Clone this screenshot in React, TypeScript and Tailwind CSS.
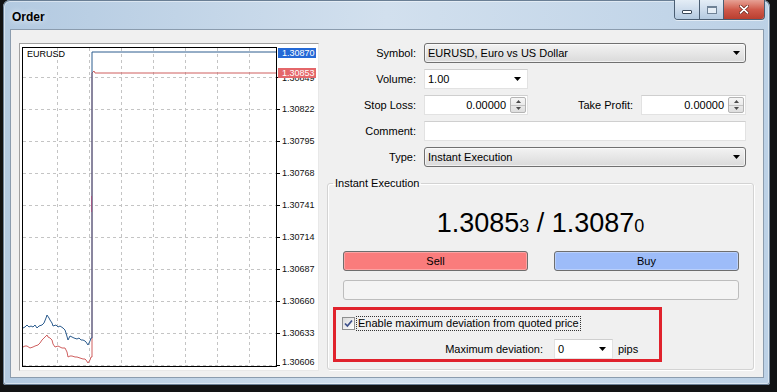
import React from "react";

const gridX = [37, 69, 101, 133, 165, 197, 229];
const gridY = [33, 65, 97, 129, 161, 193, 225, 257, 289, 321];

const axisLabels: [string, number][] = [
  ["1.30822", 65],
  ["1.30795", 97],
  ["1.30768", 129],
  ["1.30741", 161],
  ["1.30714", 193],
  ["1.30687", 225],
  ["1.30660", 257],
  ["1.30633", 289],
  ["1.30606", 318],
];

const askLine =
  "3,284 5,283 7,281 9,283 11,282 13,283 15,281 17,284 19,282 22,281 24,279 26,274 27,271 29,274 30,276 32,279 33,282 36,281 38,283 40,282 43,284 45,286 46,289 48,296 50,292 52,293 54,294 57,295 59,294 61,296 63,296 65,297 66,298 68,301 70,297 71,294 72,294 72,8 256,8";

const bidLine =
  "3,303 5,302 7,302 10,304 13,303 15,302 18,301 20,299 22,296 24,294 25,293 27,291 28,293 30,294 32,296 33,300 35,303 38,302 40,303 42,304 45,304 47,308 48,313 50,312 52,312 55,313 57,313 60,314 63,315 65,315 66,316 68,319 70,316 71,313 72,313 72,29 74,27 75,29 256,29";

function PriceChart() {
  return (
    <div className="h-[328px] w-[300px] border border-t-[#a0a0a0] border-l-[#a0a0a0] border-r-[#e8e8e8] border-b-[#e8e8e8] bg-white">
      <svg width="298" height="326" viewBox="0 0 298 326" className="block" fontFamily="'Liberation Sans', Arial, sans-serif">
        <defs>
          <clipPath id="under-bid">
            <rect x={258} y={34} width={40} height={6} />
          </clipPath>
        </defs>
        {gridX.map((x) => (
          <line key={x} x1={x + 0.5} y1={4} x2={x + 0.5} y2={322} stroke="#c4c4c4" strokeDasharray="3 3" />
        ))}
        {gridY.map((y) => (
          <line key={y} x1={3} y1={y + 0.5} x2={256} y2={y + 0.5} stroke="#c4c4c4" strokeDasharray="3 3" />
        ))}
        {gridY.map((y) => (
          <line key={"t" + y} x1={257} y1={y + 0.5} x2={260} y2={y + 0.5} stroke="#000" />
        ))}
        <polyline points={bidLine} fill="none" stroke="#cf5f5f" strokeWidth="1" />
        <polyline points={askLine} fill="none" stroke="#2c5c8e" strokeWidth="1" />
        <line x1={71.5} y1={152} x2={71.5} y2={168} stroke="#a25a86" />
        <rect x={2.5} y={3.5} width={254} height={319} fill="none" stroke="#000" />
        <text x={7} y={13} fontSize="9" fill="#000">
          EURUSD
        </text>
        {axisLabels.map(([t, y]) => (
          <text key={t} x={262} y={y + 3} fontSize="9" fill="#111">
            {t}
          </text>
        ))}
        <g clipPath="url(#under-bid)">
          <text x={262} y={37} fontSize="9" fill="#111">
            1.30849
          </text>
        </g>
        <rect x={258} y={24} width={38} height={10} fill="#e4676a" />
        <text x={262} y={32} fontSize="9" fill="#fff">
          1.30853
        </text>
        <rect x={258} y={4} width={38} height={10} fill="#2469d6" />
        <text x={262} y={12} fontSize="9" fill="#fff">
          1.30870
        </text>
      </svg>
    </div>
  );
}

function DropArrow() {
  return (
    <svg width="7" height="4" viewBox="0 0 7 4" className="block">
      <path d="M0 0h7L3.5 4z" fill="#000" />
    </svg>
  );
}

function SelectBox({ value }: { value: string }) {
  return (
    <div className="flex h-[20px] flex-1 items-center justify-between rounded-[3px] border border-[#707070] bg-linear-to-b from-[#f3f3f3] to-[#dadada] pl-[3px] pr-[5px] shadow-[inset_0_0_0_1px_rgba(255,255,255,0.6)]">
      <span>{value}</span>
      <DropArrow />
    </div>
  );
}

function ComboBox({ value, width }: { value: string; width: string }) {
  return (
    <div className={`flex h-[20px] items-center justify-between border border-[#e2e2e2] border-t-[#cfcfcf] bg-white pl-[3px] pr-[6px] ${width}`}>
      <span>{value}</span>
      <DropArrow />
    </div>
  );
}

function Spin() {
  return (
    <div className="m-[1px] flex w-[16px] flex-col overflow-hidden rounded-[2px] border border-[#b4b4b4] bg-linear-to-b from-[#f6f6f6] to-[#dedede]">
      <div className="flex flex-1 items-center justify-center border-b border-[#c4c4c4]">
        <svg width="5" height="3" viewBox="0 0 5 3" className="block">
          <path d="M0 3h5L2.5 0z" fill="#4a4a4a" />
        </svg>
      </div>
      <div className="flex flex-1 items-center justify-center">
        <svg width="5" height="3" viewBox="0 0 5 3" className="block">
          <path d="M0 0h5L2.5 3z" fill="#4a4a4a" />
        </svg>
      </div>
    </div>
  );
}

function SpinInput({ value, width }: { value: string; width: string }) {
  return (
    <div className={`flex h-[20px] border border-[#e2e2e2] border-t-[#cfcfcf] bg-white ${width}`}>
      <div className="flex flex-1 items-center justify-end pr-[3px]">{value}</div>
      <Spin />
    </div>
  );
}

function FormRow({ label, children }: { label: string; children: React.ReactNode }) {
  return (
    <div className="flex h-[20px] items-center gap-[8px]">
      <div className="w-[89px] text-right">{label}</div>
      {children}
    </div>
  );
}

function CaptionButtons() {
  return (
    <div className="mr-[5px] flex h-[20px] overflow-hidden rounded-b-[4px] border border-t-0 border-[#4a5d72] shadow-[0_1px_0_rgba(255,255,255,0.55)]">
      <div className="flex w-[25px] items-end justify-center border-r border-[#4a5d72] bg-linear-to-b from-[#e4edf6] via-[#cddcec] to-[#b3c9df] pb-[5px]">
        <div className="h-[4px] w-[10px] rounded-[1px] border border-[#3a4858] bg-white" />
      </div>
      <div className="flex w-[24px] items-center justify-center border-r border-[#4a5d72] bg-linear-to-b from-[#e4edf6] via-[#cddcec] to-[#b3c9df]">
        <div className="h-[8px] w-[10px] border border-t-2 border-[#6f8296] bg-[#e6eef6]" />
      </div>
      <div className="flex w-[40px] items-center justify-center bg-linear-to-b from-[#e6a195] via-[#d05a4b] to-[#b93e2f]">
        <svg width="10" height="9" viewBox="0 0 10 9" className="block">
          <path d="M1.5 1.2L8.5 7.8M8.5 1.2L1.5 7.8" stroke="#6b2018" strokeWidth="3.2" strokeLinecap="round" />
          <path d="M1.5 1.2L8.5 7.8M8.5 1.2L1.5 7.8" stroke="#fff" strokeWidth="1.8" strokeLinecap="round" />
        </svg>
      </div>
    </div>
  );
}

export default function App() {
  return (
    <div className="h-[392px] w-[777px] overflow-hidden bg-[#121314] font-['Liberation_Sans',Arial,sans-serif] text-[11px] leading-[13px] text-black">
      <div className="ml-[3px] flex h-[385px] w-[767px] flex-col rounded-t-[7px] rounded-b-[3px] bg-linear-to-r from-[#b3cae1] via-[#d2e0ee] to-[#bcd1e6] shadow-[inset_0_0_0_1px_#6a7f95,inset_0_0_0_2px_rgba(255,255,255,0.45)]">
        <div className="flex h-[29px] items-start justify-between">
          <div className="pl-[9px] pt-[10px] text-[12px] font-bold leading-[14px] [text-shadow:0_0_6px_rgba(255,255,255,0.95)]">
            Order
          </div>
          <CaptionButtons />
        </div>

        <div className="ml-[7px] flex h-[349px] w-[754px] items-start gap-[8px] border border-[#8b9cae] bg-[#f0f0f0] pl-[8px] pt-[13px]">
          <PriceChart />

          <div className="flex w-[425px] flex-col">
            <div className="flex flex-col gap-[6px] pr-[6px]">
              <FormRow label="Symbol:">
                <SelectBox value="EURUSD, Euro vs US Dollar" />
              </FormRow>
              <FormRow label="Volume:">
                <ComboBox value="1.00" width="w-[104px]" />
              </FormRow>
              <FormRow label="Stop Loss:">
                <SpinInput value="0.00000" width="w-[104px]" />
                <div className="flex-1 text-right">Take Profit:</div>
                <SpinInput value="0.00000" width="w-[105px]" />
              </FormRow>
              <FormRow label="Comment:">
                <div className="h-[20px] flex-1 border border-[#e2e2e2] border-t-[#cfcfcf] bg-white" />
              </FormRow>
              <FormRow label="Type:">
                <SelectBox value="Instant Execution" />
              </FormRow>
            </div>

            <fieldset className="mt-[10px] rounded-[3px] border border-[#d3d3d3] pb-[7px] shadow-[inset_1px_1px_0_#fff,1px_1px_0_#fff]">
              <legend className="ml-[5px] px-[2px] leading-[13px]">Instant Execution</legend>

              <div className="mt-[18px] h-[30px] text-center text-[27px] leading-[30px]">
                1.3085<span className="text-[18px]">3</span> / 1.3087<span className="text-[18px]">0</span>
              </div>

              <div className="pl-[15px] pr-[14px]">
                <div className="mt-[13px] flex gap-[26px]">
                  <div className="flex h-[20px] w-[185px] items-center justify-center rounded-[3px] border border-[#6e6e6e] bg-[#fa7c7c] shadow-[inset_0_0_0_1px_rgba(255,255,255,0.3)]">
                    Sell
                  </div>
                  <div className="flex h-[20px] w-[185px] items-center justify-center rounded-[3px] border border-[#6e6e6e] bg-[#9dbcf9] shadow-[inset_0_0_0_1px_rgba(255,255,255,0.3)]">
                    Buy
                  </div>
                </div>
                <div className="mt-[9px] h-[20px] rounded-[3px] border border-[#bdbdbd] bg-[#f4f4f4]" />
              </div>

              <div className="ml-[5px] mt-[7px] h-[55px] w-[329px] border-[3px] border-[#e0222c] pl-[6px] pt-[5px]">
                <div className="flex h-[16px] items-center">
                  <div className="flex h-[13px] w-[13px] items-center justify-center border border-[#8e8f8f] bg-linear-to-br from-[#dadada] to-white">
                    <svg width="9" height="9" viewBox="0 0 9 9" className="block">
                      <path d="M1 4.5L3.4 7L8 1.5" fill="none" stroke="#3c4f8a" strokeWidth="1.7" />
                    </svg>
                  </div>
                  <div className="ml-[1px] border border-dotted border-[#333] px-[1px] leading-[13px]">
                    Enable maximum deviation from quoted price
                  </div>
                </div>
                <div className="mt-[8px] flex h-[20px] items-center">
                  <div className="w-[201px] text-right">Maximum deviation:</div>
                  <div className="ml-[11px]">
                    <ComboBox value="0" width="w-[59px]" />
                  </div>
                  <div className="ml-[5px]">pips</div>
                </div>
              </div>
            </fieldset>
          </div>
        </div>
      </div>
    </div>
  );
}
